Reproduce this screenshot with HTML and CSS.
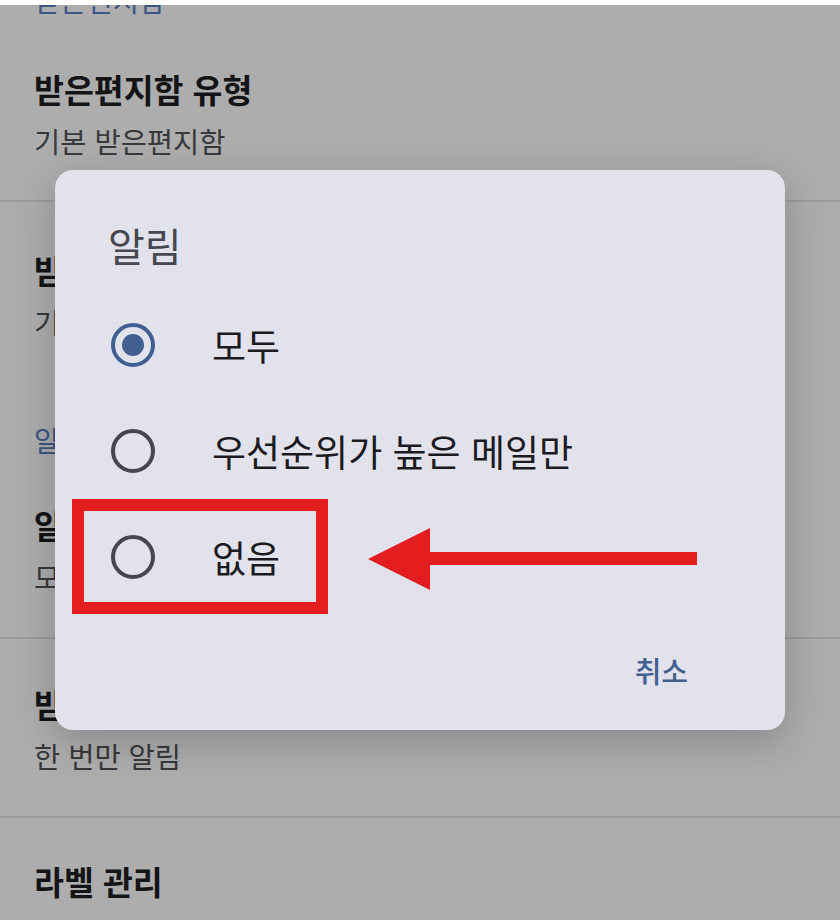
FILE: index.html
```html
<!DOCTYPE html>
<html lang="ko">
<head>
<meta charset="utf-8">
<title>알림 설정</title>
<link rel="stylesheet" href="styles.css">
</head>
<body>
<div class="statusbar"></div>
<main class="settings">
  <div class="section-header header-top">받은편지함</div>
  <div class="item item-first divided">
    <div class="item-title">받은편지함 유형</div>
    <div class="item-sub">기본 받은편지함</div>
  </div>
  <div class="item item-second">
    <div class="item-title">받은편지함 카테고리</div>
    <div class="item-sub">기본, 소셜, 프로모션</div>
  </div>
  <div class="section-header header-mid">알림</div>
  <div class="item item-third divided">
    <div class="item-title">알림</div>
    <div class="item-sub">모두</div>
  </div>
  <div class="item item-fourth divided">
    <div class="item-title">받은편지함 알림</div>
    <div class="item-sub">한 번만 알림</div>
  </div>
  <div class="item item-last">
    <div class="item-title">라벨 관리</div>
  </div>
</main>

<div class="dialog" role="dialog">
  <div class="dialog-title">알림</div>
  <div class="options">
    <div class="option">
      <span class="radio radio-on"></span>
      <span class="option-label">모두</span>
    </div>
    <div class="option">
      <span class="radio"></span>
      <span class="option-label">우선순위가 높은 메일만</span>
    </div>
    <div class="option">
      <span class="radio"></span>
      <span class="option-label">없음</span>
    </div>
  </div>
  <div class="actions">
    <span class="btn-text">취소</span>
  </div>
</div>

<div class="highlight"></div>
<svg class="arrow" width="330" height="62" viewBox="0 0 330 62">
  <rect x="60" y="24" width="269" height="13" fill="#e41e1f"/>
  <polygon points="0,31 62,0 62,62" fill="#e41e1f"/>
</svg>
</body>
</html>
```
FILE: styles.css
```css
* { box-sizing: border-box; }

html, body {
  margin: 0;
  padding: 0;
}

body {
  width: 840px;
  height: 920px;
  overflow: hidden;
  background: #adadad;
  font-family: "Noto Sans CJK KR", "Noto Sans", sans-serif;
  position: relative;
}

.statusbar {
  height: 5px;
  background: #ffffff;
  position: relative;
  z-index: 2;
}

.settings {
  display: flex;
  flex-direction: column;
  overflow: hidden;
  height: 915px;
}

.section-header {
  padding-left: 34px;
  font-size: 28.5px;
  line-height: 40px;
  color: #3d5785;
  white-space: nowrap;
}

.header-top { margin-top: -25px; }
.header-mid { margin-top: 78px; }

.item {
  padding-left: 34px;
  display: flex;
  flex-direction: column;
  white-space: nowrap;
}

.divided { border-bottom: 2px solid #9b9b9b; }

.item-title {
  font-size: 32.5px;
  line-height: 44px;
  font-weight: 700;
  color: #141416;
}

.item-sub {
  margin-top: 10px;
  font-size: 28.5px;
  line-height: 40px;
  color: #38393d;
}

.item-first { padding-top: 47px; padding-bottom: 39px; }
.item-second { padding-top: 46px; }
.item-third { padding-top: 43px; padding-bottom: 40px; }
.item-fourth { padding-top: 43px; padding-bottom: 40px; }
.item-last { padding-top: 41px; }

.dialog {
  position: absolute;
  left: 55px;
  top: 170px;
  width: 730px;
  height: 560px;
  background: #e2e2ec;
  border-radius: 18px;
  box-shadow: 0 12px 40px rgba(0, 0, 0, 0.22);
  padding: 51px 0 0 53px;
  display: flex;
  flex-direction: column;
  z-index: 3;
}

.dialog-title {
  font-size: 40px;
  line-height: 48px;
  color: #45464f;
}

.options {
  margin-top: 23px;
  display: flex;
  flex-direction: column;
}

.option {
  height: 106px;
  display: flex;
  align-items: center;
}

.radio {
  margin-left: 3px;
  width: 44px;
  height: 44px;
  border: 4px solid #45464f;
  border-radius: 50%;
  flex: none;
  display: flex;
  align-items: center;
  justify-content: center;
}

.radio-on {
  border-color: #415f91;
}

.radio-on::after {
  content: "";
  width: 22px;
  height: 22px;
  border-radius: 50%;
  background: #415f91;
}

.option-label {
  margin-left: 57px;
  font-size: 37px;
  line-height: 48px;
  color: #1b1b1f;
  white-space: nowrap;
}

.actions {
  margin-top: 40px;
  display: flex;
  justify-content: flex-end;
  padding-right: 97px;
}

.btn-text {
  font-size: 29px;
  line-height: 40px;
  font-weight: 500;
  color: #415f91;
}

.highlight {
  position: absolute;
  left: 72px;
  top: 499px;
  width: 256px;
  height: 115px;
  border: 12px solid #e41e1f;
  z-index: 4;
}

.arrow {
  position: absolute;
  left: 368px;
  top: 528px;
  z-index: 4;
}
```
